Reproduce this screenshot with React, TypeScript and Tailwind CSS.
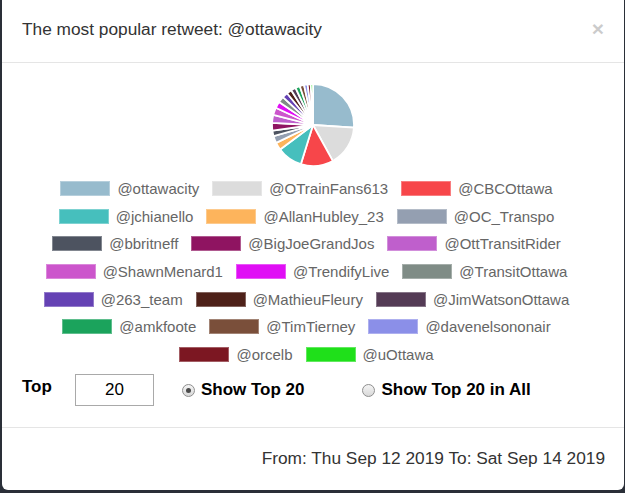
import React from 'react'

type Account = { name: string; value: number; color: string; swatch: string }

const accounts: Account[] = [
  { name: '@ottawacity', value: 26, color: '#97bbcd', swatch: 'bg-[#97bbcd]' },
  { name: '@OTrainFans613', value: 16, color: '#dcdcdc', swatch: 'bg-[#dcdcdc]' },
  { name: '@CBCOttawa', value: 12.8, color: '#f7464a', swatch: 'bg-[#f7464a]' },
  { name: '@jchianello', value: 10, color: '#46bfbd', swatch: 'bg-[#46bfbd]' },
  { name: '@AllanHubley_23', value: 3, color: '#fdb45c', swatch: 'bg-[#fdb45c]' },
  { name: '@OC_Transpo', value: 2.8, color: '#949fb1', swatch: 'bg-[#949fb1]' },
  { name: '@bbritneff', value: 2.2, color: '#4d5360', swatch: 'bg-[#4d5360]' },
  { name: '@BigJoeGrandJos', value: 3, color: '#8f1461', swatch: 'bg-[#8f1461]' },
  { name: '@OttTransitRider', value: 3.2, color: '#bf5fcc', swatch: 'bg-[#bf5fcc]' },
  { name: '@ShawnMenard1', value: 2.9, color: '#cc55cc', swatch: 'bg-[#cc55cc]' },
  { name: '@TrendifyLive', value: 2.6, color: '#e00ef5', swatch: 'bg-[#e00ef5]' },
  { name: '@TransitOttawa', value: 2.4, color: '#7f8c86', swatch: 'bg-[#7f8c86]' },
  { name: '@263_team', value: 2.2, color: '#6542b4', swatch: 'bg-[#6542b4]' },
  { name: '@MathieuFleury', value: 2, color: '#4e2119', swatch: 'bg-[#4e2119]' },
  { name: '@JimWatsonOttawa', value: 1.9, color: '#543b55', swatch: 'bg-[#543b55]' },
  { name: '@amkfoote', value: 1.8, color: '#1ba35c', swatch: 'bg-[#1ba35c]' },
  { name: '@TimTierney', value: 1.7, color: '#7a4f3a', swatch: 'bg-[#7a4f3a]' },
  { name: '@davenelsononair', value: 1.4, color: '#8b8fe8', swatch: 'bg-[#8b8fe8]' },
  { name: '@orcelb', value: 1.2, color: '#7c1722', swatch: 'bg-[#7c1722]' },
  { name: '@uOttawa', value: 0.9, color: '#1fe01a', swatch: 'bg-[#1fe01a]' },
]

// legend rows as the chart wraps them
const rows = [
  [0, 1, 2],
  [3, 4, 5],
  [6, 7, 8],
  [9, 10, 11],
  [12, 13, 14],
  [15, 16, 17],
  [18, 19],
]

function Pie() {
  const cx = 42
  const cy = 42
  const r = 41
  const total = accounts.reduce((s, a) => s + a.value, 0)
  let angle = 0
  const slices = accounts.map((a) => {
    const a0 = angle
    const a1 = angle + (a.value / total) * Math.PI * 2
    angle = a1
    const x0 = cx + r * Math.sin(a0)
    const y0 = cy - r * Math.cos(a0)
    const x1 = cx + r * Math.sin(a1)
    const y1 = cy - r * Math.cos(a1)
    const large = a1 - a0 > Math.PI ? 1 : 0
    const d = `M${cx},${cy} L${x0},${y0} A${r},${r} 0 ${large} 1 ${x1},${y1} Z`
    return <path key={a.name} d={d} fill={a.color} stroke="#fff" strokeWidth={1.8} strokeLinejoin="round" />
  })
  return (
    <svg width="84" height="84" viewBox="0 0 84 84" className="block mx-auto">
      {slices}
    </svg>
  )
}

function Radio({ checked }: { checked?: boolean }) {
  return (
    <span className="w-[13px] h-[13px] rounded-full border border-[#8e8e8e] bg-gradient-to-b from-[#f4f4f4] to-[#d9d9d9] flex items-center justify-center shrink-0">
      {checked && <span className="w-[5px] h-[5px] rounded-full bg-[#4a4a4a]" />}
    </span>
  )
}

export default function App() {
  return (
    <div className="w-[625px] h-[493px] bg-[#2a2f38] overflow-hidden font-['Liberation_Sans',Arial,sans-serif]">
      <div className="ml-[2px] w-[622px] h-[490px] bg-white rounded-b-[6px] flex flex-col">
        {/* Header */}
        <div className="h-[63px] border-b border-[#e5e5e5] flex items-center justify-between pl-[20px] pr-[20px] shrink-0">
          <h4 className="text-[17.3px] text-[#333] leading-none -mt-[3px]">The most popular retweet: @ottawacity</h4>
          <button className="text-[21px] font-bold text-black opacity-20 leading-none -mt-[6px]">×</button>
        </div>

        {/* Body */}
        <div className="pt-[20px] pb-[21px] shrink-0">
          <Pie />

          <div className="mt-[8px]">
            {rows.map((row, i) => (
              <div key={i} className="h-[27.6px] flex items-center justify-center">
                {row.map((idx) => {
                  const a = accounts[idx]
                  return (
                    <div key={a.name} className="flex items-center mr-[13px]">
                      <span className={`w-[50px] h-[15px] border border-white/30 ${a.swatch}`} />
                      <span className="ml-[7px] text-[15px] text-[#666] leading-none whitespace-nowrap">{a.name}</span>
                    </div>
                  )
                })}
              </div>
            ))}
          </div>

          <div className="mt-[6px] h-[32px] flex items-center pl-[20px]">
            <span className="text-[17px] font-bold text-black -mt-[6px]">Top</span>
            <input
              type="text"
              defaultValue="20"
              className="ml-[23px] w-[79px] h-[32px] border border-[#a9a9a9] text-center text-[17px] text-black outline-none"
            />
            <label className="ml-[28px] flex items-center">
              <Radio checked />
              <span className="ml-[6px] text-[17px] font-bold text-black">Show Top 20</span>
            </label>
            <label className="ml-[58px] flex items-center">
              <Radio />
              <span className="ml-[6px] text-[17px] font-bold text-black">Show Top 20 in All</span>
            </label>
          </div>
        </div>

        {/* Footer */}
        <div className="flex-1 border-t border-[#e5e5e5] flex items-center justify-end pr-[19px]">
          <span className="text-[17.3px] text-[#333]">From: Thu Sep 12 2019 To: Sat Sep 14 2019</span>
        </div>
      </div>
    </div>
  )
}
